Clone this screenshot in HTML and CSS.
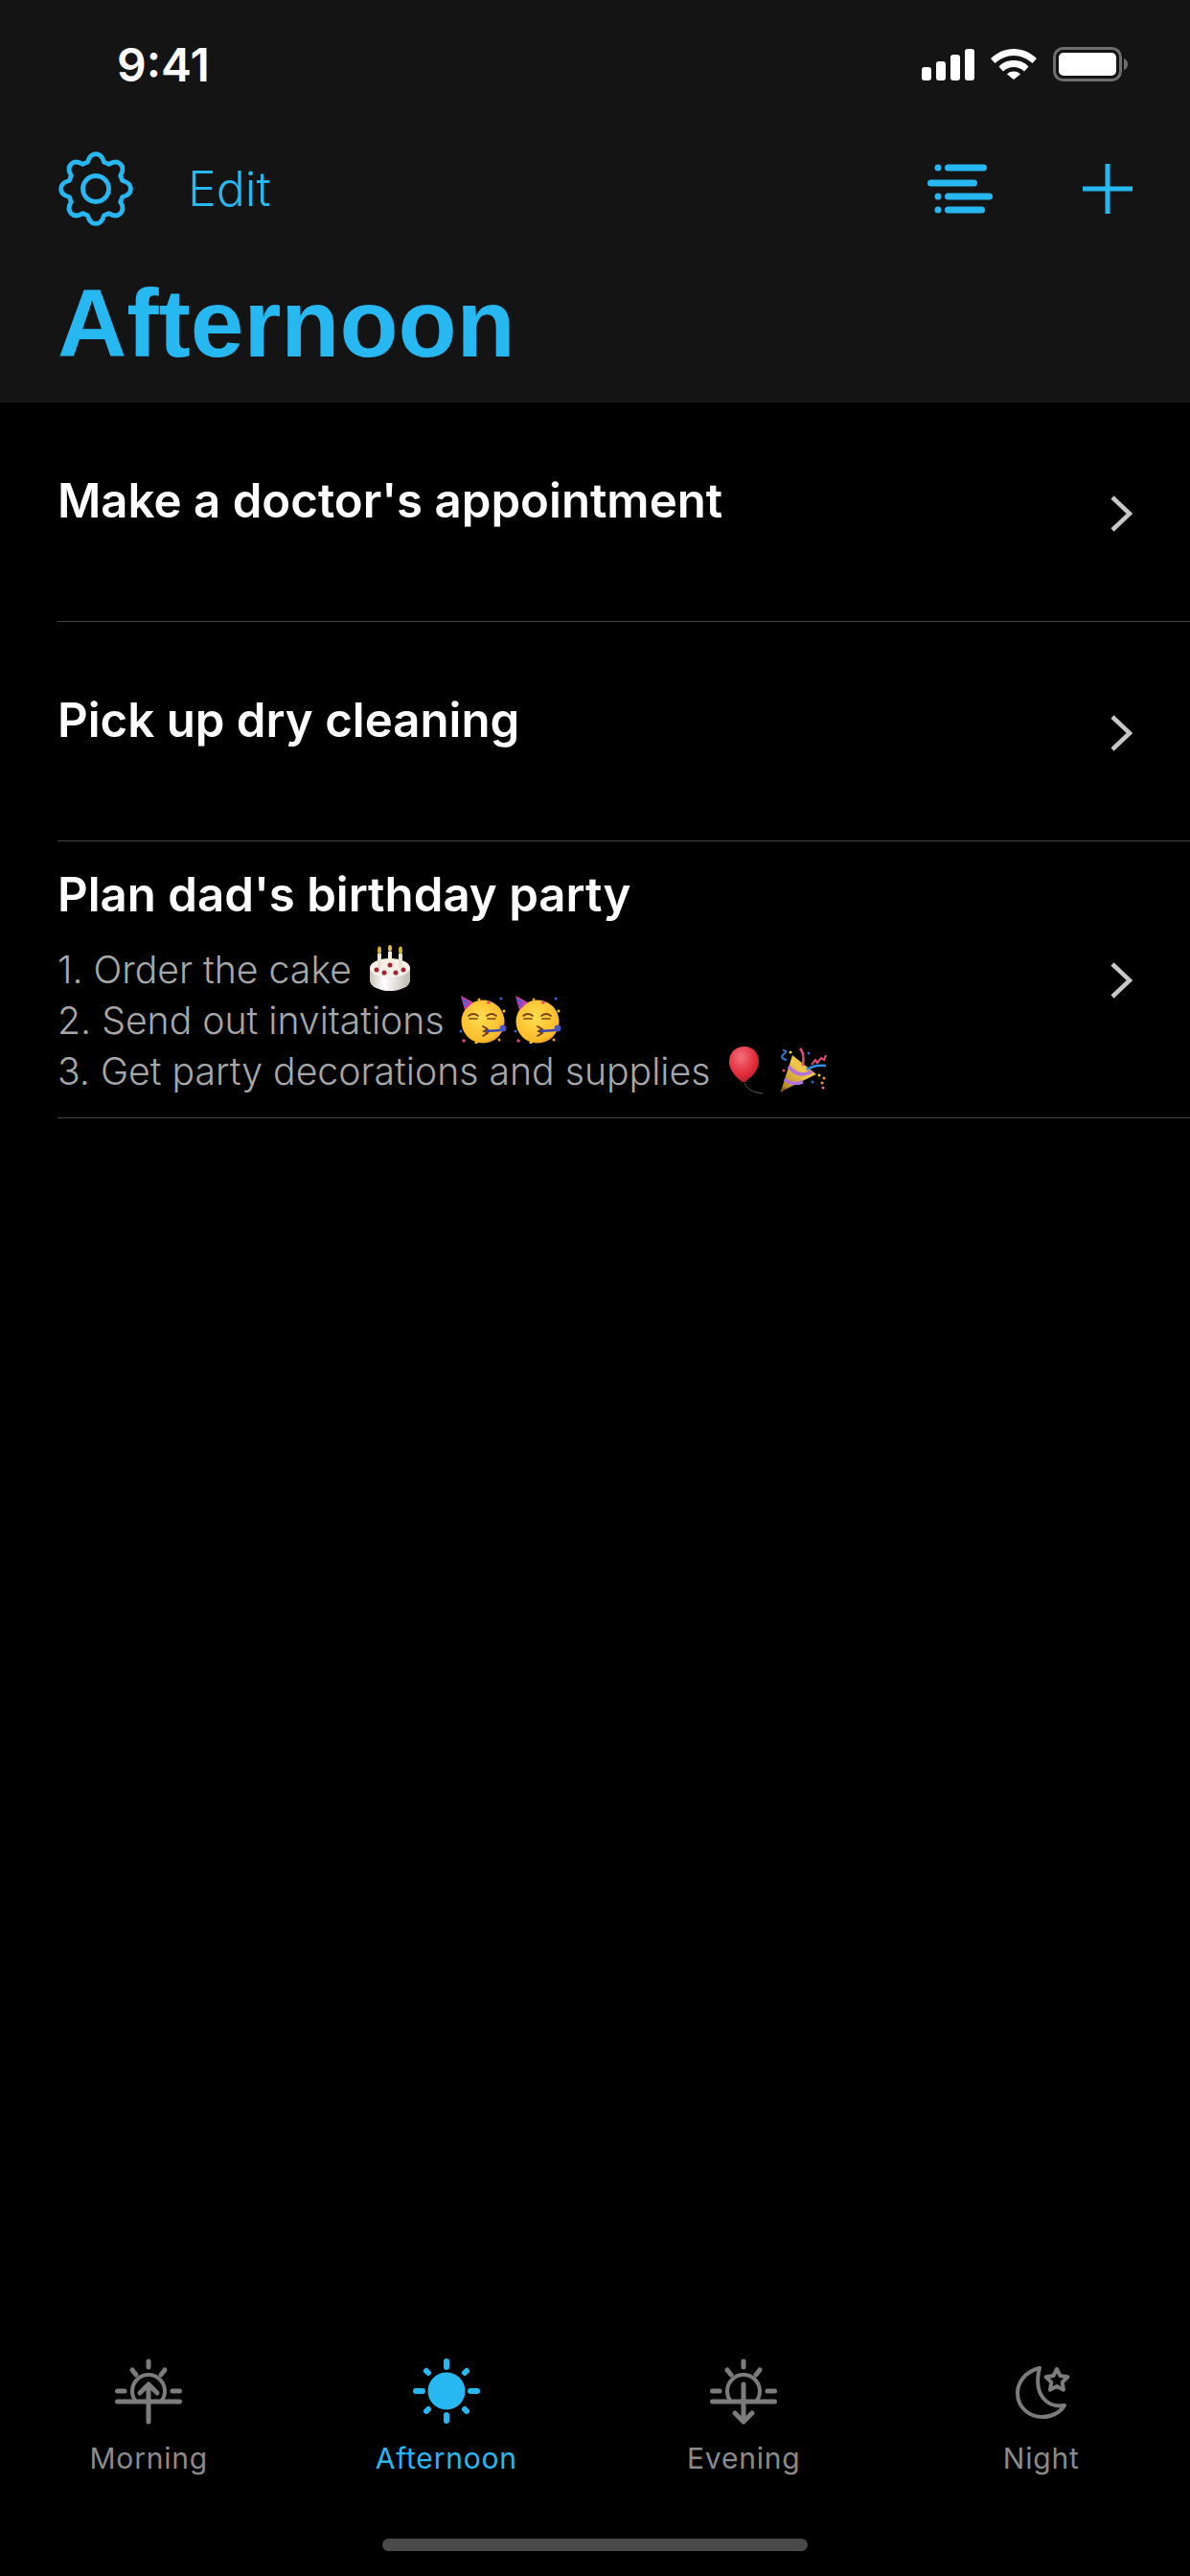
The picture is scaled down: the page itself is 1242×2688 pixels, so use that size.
FILE: index.html
```html
<!DOCTYPE html>
<html lang="en">
<head>
<meta charset="utf-8">
<title>Afternoon</title>
<link rel="stylesheet" href="styles.css">
</head>
<body>
<div class="app">
  <header class="header">
    <div class="status">
      <span class="time">9:41</span>
      <div class="status-icons">
        <svg class="ic-signal" viewBox="0 0 55 33"><rect x="0" y="19" width="10" height="14" rx="3"/><rect x="15" y="13" width="10" height="20" rx="3"/><rect x="30" y="6" width="10" height="27" rx="3"/><rect x="45" y="0" width="10" height="33" rx="3"/></svg>
        <svg class="ic-wifi" viewBox="0 0 48 32"><path d="M24 0C15 0 7 3.500 0 10l4.500 5C10 10 17 7 24 7s14 3 19.500 8L48 10C41 3.500 33 0 24 0z"/><path d="M24 12c-6 0-11.500 2-15.500 6.500l4.500 5C16 20.500 20 19 24 19s8 1.500 11 4.500l4.500-5C35.500 14 30 12 24 12z"/><path d="M24 23.500c-3 0-5.500 1-7 3L24 32l7-5.500c-1.500-2-4-3-7-3z"/></svg>
        <svg class="ic-batt" viewBox="0 0 78 36"><rect x="1.500" y="1.500" width="69" height="33" rx="9" fill="none" stroke="#6e6e6e" stroke-width="3"/><rect x="6" y="6" width="60" height="24" rx="5" fill="#fff"/><path d="M74 12c3 1 4 3.500 4 6s-1 5-4 6z" fill="#6e6e6e"/></svg>
      </div>
    </div>
    <nav class="nav">
      <div class="nav-left">
        <svg class="ic-gear" viewBox="-40 -40 80 80"><path d="M-8.500-27.700Q-6.400-36.400 0-36.400Q6.400-36.400 8.500-27.700A29 29 0 0 1 13.600-25.600Q21.200-30.300 25.750-25.750Q30.300-21.200 25.600-13.600A29 29 0 0 1 27.700-8.500Q36.400-6.400 36.400 0Q36.400 6.400 27.700 8.500A29 29 0 0 1 25.600 13.600Q30.300 21.200 25.750 25.750Q21.200 30.300 13.600 25.600A29 29 0 0 1 8.500 27.700Q6.400 36.400 0 36.400Q-6.400 36.400-8.500 27.700A29 29 0 0 1-13.600 25.600Q-21.200 30.300-25.750 25.750Q-30.300 21.200-25.600 13.600A29 29 0 0 1-27.700 8.500Q-36.400 6.400-36.400 0Q-36.400-6.400-27.700-8.500A29 29 0 0 1-25.600-13.600Q-30.300-21.200-25.750-25.750Q-21.200-30.300-13.600-25.600A29 29 0 0 1-8.500-27.700Z"/><circle r="13.500"/></svg>
        <span class="edit">Edit</span>
      </div>
      <div class="nav-right">
        <svg class="ic-list" viewBox="0 0 68 52"><circle cx="11" cy="4" r="3.500"/><circle cx="11" cy="34" r="3.500"/><circle cx="11" cy="48" r="3.500"/><rect x="18" y="0.500" width="44" height="7" rx="3.500"/><rect x="0" y="16.500" width="52" height="7" rx="3.500"/><rect x="18" y="30.500" width="50" height="7" rx="3.500"/><rect x="18" y="44.500" width="42" height="7" rx="3.500"/></svg>
        <svg class="ic-plus" viewBox="0 0 52 52"><path d="M26 0V52M0 26H52"/></svg>
      </div>
    </nav>
    <h1 class="title">Afternoon</h1>
  </header>

  <main class="list">
    <section class="row">
      <div class="row-body">
        <h2 class="row-title">Make a doctor's appointment</h2>
        <div class="row-notes"></div>
      </div>
      <svg class="chev" viewBox="0 0 24 40"><path d="M3 3L21 20L3 37"/></svg>
    </section>
    <section class="row">
      <div class="row-body">
        <h2 class="row-title">Pick up dry cleaning</h2>
        <div class="row-notes"></div>
      </div>
      <svg class="chev" viewBox="0 0 24 40"><path d="M3 3L21 20L3 37"/></svg>
    </section>
    <section class="row row-full">
      <div class="row-body">
        <h2 class="row-title">Plan dad's birthday party</h2>
        <div class="row-notes">
          <p class="note">1. Order the cake
            <svg class="emoji" viewBox="0 0 50 50"><defs><linearGradient id="cakeG" x1="0" x2="1"><stop offset="0" stop-color="#c9c5bd"/><stop offset=".35" stop-color="#fff"/><stop offset="1" stop-color="#bdb9b0"/></linearGradient></defs><ellipse cx="25" cy="37" rx="21" ry="11" fill="url(#cakeG)"/><rect x="4" y="24" width="42" height="14" fill="url(#cakeG)"/><ellipse cx="25" cy="24" rx="21" ry="10" fill="#f4f0e8"/><path d="M6 24c3 6 5 5 7 7 3 1 3-2 6 0 4 2 5 1 7 2 3 1 4-2 7-2 4 0 7-3 11-7" fill="none" stroke="#f6f3ec" stroke-width="2"/><rect x="12" y="9" width="4" height="15" fill="#e9e2d2"/><rect x="23" y="7" width="4" height="17" fill="#f3eee0"/><rect x="34" y="9" width="4" height="15" fill="#e9e2d2"/><ellipse cx="14" cy="5.500" rx="2" ry="4" fill="#d7b23a"/><ellipse cx="25" cy="3.500" rx="2" ry="3.500" fill="#e0bd45"/><ellipse cx="36" cy="5.500" rx="2" ry="4" fill="#d7b23a"/><circle cx="11" cy="26" r="2.500" fill="#a3222f"/><circle cx="19" cy="29" r="2.500" fill="#a3222f"/><circle cx="31" cy="29" r="2.500" fill="#a3222f"/><circle cx="39" cy="26" r="2.500" fill="#a3222f"/><circle cx="25" cy="21" r="2.500" fill="#a3222f"/></svg></p>
          <p class="note">2. Send out invitations
            <svg class="emoji emoji-face" viewBox="0 0 50 50"><defs><radialGradient id="faceG" cx=".45" cy=".4" r=".7"><stop offset="0" stop-color="#ffdc4e"/><stop offset=".75" stop-color="#fdbd2c"/><stop offset="1" stop-color="#f0901a"/></radialGradient></defs><g id="partyFace"><circle cx="25" cy="27" r="22.500" fill="url(#faceG)"/><path d="M2 0L15 7 6 15z" fill="#d03ea5"/><path d="M3.500 4L10 7.500M5 9L8.500 10.500" stroke="#4a5fd6" stroke-width="2"/><circle cx="21" cy="4" r="1.500" fill="#f2a125"/><circle cx="44" cy="3" r="1.500" fill="#3366d6"/><circle cx="47" cy="16" r="1.500" fill="#f5d327"/><circle cx="2" cy="37" r="1.500" fill="#3366d6"/><circle cx="5" cy="47" r="1.800" fill="#e04570"/><circle cx="18" cy="49" r="1.500" fill="#f5d327"/><circle cx="42" cy="46" r="1.500" fill="#f2a125"/><circle cx="31" cy="7" r="1.800" fill="#e04570"/><path d="M10 21q5-4 10 0M29 21q5-4 10 0M11 24h8M30 24h8" fill="none" stroke="#7a4310" stroke-width="1.700" stroke-linecap="round"/><path d="M25 32l5 3-4 2 4 2-5 3" fill="none" stroke="#6b3a0e" stroke-width="1.700" stroke-linecap="round"/><path d="M28 37L44 36" stroke="#3a46b8" stroke-width="2.400"/><circle cx="46" cy="34" r="3.500" fill="#4d55c4"/></g></svg>
            <svg class="emoji emoji-face emoji-tight" viewBox="0 0 50 50"><use href="#partyFace"/></svg></p>
          <p class="note">3. Get party decorations and supplies
            <svg class="emoji emoji-balloon" viewBox="0 0 50 50"><defs><radialGradient id="balloonG" cx=".4" cy=".3" r=".8"><stop offset="0" stop-color="#f5707c"/><stop offset=".6" stop-color="#e22c3b"/><stop offset="1" stop-color="#b01b2a"/></radialGradient></defs><path d="M18 0C7 0 2 8 2 16c0 9 9 19 15 21 7-3 16-12 16-21C33 8 28 0 18 0z" fill="url(#balloonG)"/><path d="M15 37h5l-2.500-3z" fill="#c92332"/><path d="M18 38c2 6 8 10 19 11" fill="none" stroke="#5a5a5a" stroke-width="1"/></svg>
            <svg class="emoji emoji-popper" viewBox="0 0 50 50"><defs><linearGradient id="coneG" x1="0" y1="1" x2="1" y2="0"><stop offset="0" stop-color="#a97f1a"/><stop offset=".6" stop-color="#f1c84a"/><stop offset="1" stop-color="#c99a2a"/></linearGradient></defs><path d="M1 47L13 9 38 29z" fill="url(#coneG)"/><path d="M9 21Q20 34 33 26M5 34Q12 41 24 37" fill="none" stroke="#b271e0" stroke-width="3.500"/><path d="M1 47l4-4" stroke="#8a5a10" stroke-width="2"/><path d="M21 2q5 5 3 18" fill="none" stroke="#e84a76" stroke-width="2.500"/><path d="M3 4q6 0 1 4t3 6" fill="none" stroke="#2f79dd" stroke-width="2"/><path d="M33 19l4-5 2 3 4-5 3 2 2-5" fill="none" stroke="#e64f79" stroke-width="2"/><path d="M28 24q8-5 20-4" fill="none" stroke="#2f8ee8" stroke-width="2.500"/><circle cx="41" cy="30" r="1.500" fill="#f5d327"/><circle cx="46" cy="33" r="1.500" fill="#f2a125"/><circle cx="34" cy="37" r="1.500" fill="#3366d6"/><circle cx="44" cy="38" r="1.500" fill="#f2a125"/><circle cx="45" cy="43" r="1.500" fill="#e66f90"/><circle cx="4" cy="25" r="1.500" fill="#e04570"/><circle cx="11" cy="6" r="1.500" fill="#f5d327"/><circle cx="30" cy="7" r="1.500" fill="#3366d6"/></svg></p>
        </div>
      </div>
      <svg class="chev" viewBox="0 0 24 40"><path d="M3 3L21 20L3 37"/></svg>
    </section>
  </main>

  <footer class="footer">
    <div class="tabs">
      <div class="tab">
        <svg class="tab-ic" viewBox="0 0 70 70"><path d="M35 4V10M18 13L22 18M52 13L48 18M2.500 35H10M60 35H67.500M2.500 46H67.500"/><path d="M22 46A17 17 0 1 1 48 46" class="thin"/><path d="M35 67V28M26 37L35 28L44 37"/></svg>
        <span class="tab-label">Morning</span>
      </div>
      <div class="tab tab-active">
        <svg class="tab-ic tab-ic-sun" viewBox="0 0 70 70"><circle cx="35" cy="35" r="19.500" class="solid"/><path d="M35 4V10M35 60V66M3 35H10M60 35H67M14 14L16 16M56 14L54 16M14 56L16 54M56 56L54 54"/></svg>
        <span class="tab-label">Afternoon</span>
      </div>
      <div class="tab">
        <svg class="tab-ic" viewBox="0 0 70 70"><path d="M35 4V10M18 13L22 18M52 13L48 18M2.500 35H10M60 35H67.500M2.500 46H67.500"/><path d="M22 46A17 17 0 1 1 48 46" class="thin"/><path d="M35 28V67M26 58L35 67L44 58"/></svg>
        <span class="tab-label">Evening</span>
      </div>
      <div class="tab">
        <svg class="tab-ic" viewBox="0 0 70 70"><path class="thin" d="M33 11C17 15 10 27 10 37C10 52 22 62 36 62C46 62 55 57 59 50C41 53 26 39 33 11Z"/><path class="thin" d="M51 12L54.500 19.100L62.400 20.300L56.700 25.900L58 33.700L51 30L44 33.700L45.300 25.900L39.600 20.300L47.500 19.100Z"/></svg>
        <span class="tab-label">Night</span>
      </div>
    </div>
    <div class="home-wrap"><div class="home"></div></div>
  </footer>
</div>
</body>
</html>
```

FILE: styles.css
```css
* { box-sizing: border-box; }
html, body { margin: 0; padding: 0; background: #000; }
body { font-family: Inter, "Noto Sans", sans-serif; }

.app {
  width: 1242px;
  height: 2688px;
  display: flex;
  flex-direction: column;
  background: #000;
  overflow: hidden;
}

.header { height: 420px; background: #141414; flex: none; }

.status {
  height: 134px;
  display: flex;
  align-items: center;
  justify-content: space-between;
  padding: 0 65px 0 122px;
}
.time { font-size: 48px; font-weight: 600; color: #fff; }
.status-icons { display: flex; align-items: center; gap: 17px; }
.ic-signal { width: 55px; height: 33px; fill: #fff; }
.ic-wifi { width: 48px; height: 34px; fill: #fff; }
.ic-batt { width: 78px; height: 36px; }

.nav {
  height: 126px;
  display: flex;
  align-items: center;
  justify-content: space-between;
  padding: 0 60px;
}
.nav-left { display: flex; align-items: center; gap: 56px; }
.nav-right { display: flex; align-items: center; gap: 94px; }
.ic-gear { width: 80px; height: 80px; fill: none; stroke: #27b8f2; stroke-width: 4.800; stroke-linejoin: round; }
.edit { font-size: 50px; font-weight: 300; color: #27b8f2; }
.ic-list { width: 68px; height: 52px; fill: #27b8f2; }
.ic-plus { width: 52px; height: 52px; fill: none; stroke: #27b8f2; stroke-width: 5; }

.title {
  margin: 0;
  padding-left: 60px;
  height: 160px;
  line-height: 154px;
  font-family: "Liberation Sans", Arial, sans-serif;
  font-size: 100px;
  font-weight: 700;
  color: #27b8f2;
}

.list { flex: 1; }

.row {
  margin-left: 60px;
  min-height: 229px;
  padding: 24px 60px 21px 0;
  display: flex;
  align-items: center;
  justify-content: space-between;
  border-bottom: 1px solid #444;
}
.row-full { min-height: 289px; padding-top: 23px; padding-bottom: 22px; }
.row-body { flex: 1; min-width: 0; }
.row-title { margin: 0; font-size: 49.200px; line-height: 62px; font-weight: 600; color: #fff; }
.row-notes { margin-top: 21px; }
.row-notes:empty { margin-top: 27px; }
.note { margin: 0; font-size: 39.200px; line-height: 53px; font-weight: 300; color: #a8a8a8; white-space: nowrap; }

.emoji { width: 50px; height: 50px; vertical-align: -10px; margin-left: 4px; }
.emoji-tight { margin-left: -4px; }
.emoji-balloon { margin-left: 7px; }
.emoji-popper { margin-left: -6px; }

.chev { width: 24px; height: 40px; fill: none; stroke: #c8c8c8; stroke-width: 4.500; flex: none; }

.footer { flex: none; }
.tabs { display: grid; grid-template-columns: repeat(4, 1fr); }
.tab { display: flex; flex-direction: column; align-items: center; gap: 15px; color: #7c7c7c; }
.tab-active { color: #27b8f2; }
.tab-ic { width: 70px; height: 70px; fill: none; stroke: currentColor; stroke-width: 5; stroke-linecap: round; stroke-linejoin: round; }
.tab-ic-sun { stroke-width: 6; }
.tab-ic .thin { stroke-width: 4; }
.tab-ic .solid { fill: currentColor; stroke: none; }
.tab-label { font-size: 30px; line-height: 40px; letter-spacing: 0.800px; color: #8a8a8a; }
.tab-active .tab-label { color: #27b8f2; }

.home-wrap { height: 103px; padding-top: 64px; display: flex; justify-content: center; }
.home { width: 444px; height: 13px; border-radius: 7px; background: #4a4a4a; }
```
